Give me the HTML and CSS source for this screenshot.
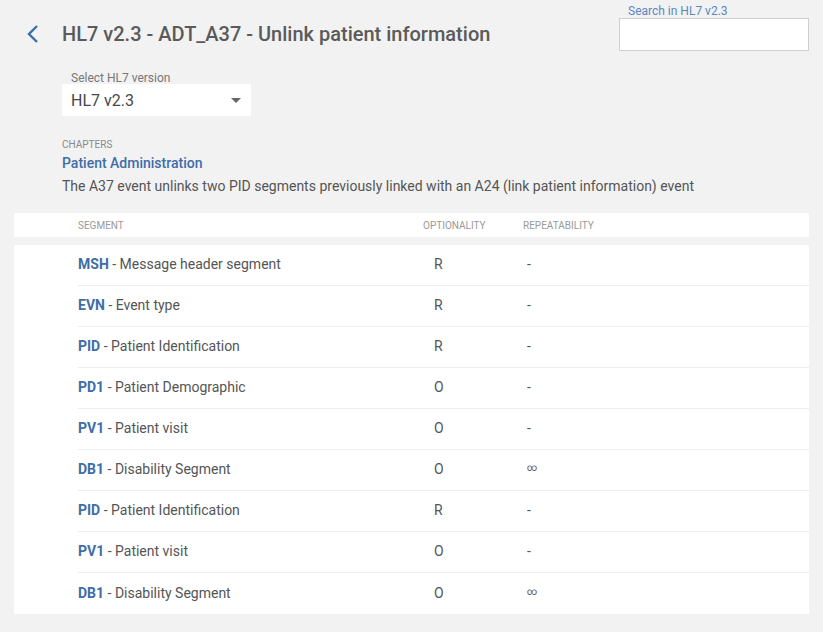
FILE: index.html
```html
<!DOCTYPE html>
<html>
<head>
<meta charset="utf-8">
<link rel="stylesheet" href="styles.css">
</head>
<body>
<div class="page">
  <header class="top">
    <div class="title-row">
      <a class="back" href="#"><svg width="14" height="20" viewBox="0 0 14 20"><path d="M11 2 L3 10 L11 18" fill="none" stroke="#3d6dab" stroke-width="2.4"/></svg></a>
      <h1 class="title">HL7 v2.3 - ADT_A37 - Unlink patient information</h1>
    </div>
    <div class="search">
      <label class="search-label">Search in HL7 v2.3</label>
      <div class="search-input"></div>
    </div>
  </header>
  <div class="version">
    <div class="version-label">Select HL7 version</div>
    <div class="select"><span>HL7 v2.3</span><span class="caret"></span></div>
  </div>
  <div class="chapters">
    <div class="chap-label">CHAPTERS</div>
    <div class="chap-name">Patient Administration</div>
    <div class="chap-desc">The A37 event unlinks two PID segments previously linked with an A24 (link patient information) event</div>
  </div>
  <div class="table">
    <div class="thead">
      <div class="c-seg">SEGMENT</div>
      <div class="c-opt">OPTIONALITY</div>
      <div class="c-rep">REPEATABILITY</div>
    </div>
    <div class="tbody">
      <div class="row"><div class="c-seg"><b>MSH</b> - Message header segment</div><div class="c-opt">R</div><div class="c-rep">-</div></div>
      <div class="row"><div class="c-seg"><b>EVN</b> - Event type</div><div class="c-opt">R</div><div class="c-rep">-</div></div>
      <div class="row"><div class="c-seg"><b>PID</b> - Patient Identification</div><div class="c-opt">R</div><div class="c-rep">-</div></div>
      <div class="row"><div class="c-seg"><b>PD1</b> - Patient Demographic</div><div class="c-opt">O</div><div class="c-rep">-</div></div>
      <div class="row"><div class="c-seg"><b>PV1</b> - Patient visit</div><div class="c-opt">O</div><div class="c-rep">-</div></div>
      <div class="row"><div class="c-seg"><b>DB1</b> - Disability Segment</div><div class="c-opt">O</div><div class="c-rep inf">∞</div></div>
      <div class="row"><div class="c-seg"><b>PID</b> - Patient Identification</div><div class="c-opt">R</div><div class="c-rep">-</div></div>
      <div class="row"><div class="c-seg"><b>PV1</b> - Patient visit</div><div class="c-opt">O</div><div class="c-rep">-</div></div>
      <div class="row last"><div class="c-seg"><b>DB1</b> - Disability Segment</div><div class="c-opt">O</div><div class="c-rep inf">∞</div></div>
    </div>
  </div>
</div>
</body>
</html>
```
FILE: styles.css
```css
* { box-sizing: border-box; }
html, body { margin: 0; padding: 0; }
body {
  background: #f2f2f2;
  font-family: Roboto, "Liberation Sans", Arial, sans-serif;
  color: #555;
  width: 823px;
  height: 632px;
  overflow: hidden;
}
.page { padding: 0 14px 0 14px; }
.top {
  display: flex;
  justify-content: space-between;
  height: 62px;
}
.title-row {
  display: flex;
  align-items: center;
  padding-top: 22px;
  box-sizing: content-box;
  height: 24px;
}
.back {
  display: flex;
  width: 48px;
  padding-left: 12px;
  align-items: center;
}
.title {
  margin: 0;
  font-size: 20px;
  font-weight: 500;
  color: #5a5a5a;
  line-height: 24px;
}
.search {
  width: 190px;
  padding-top: 4px;
}
.search-label {
  display: block;
  font-size: 12px;
  color: #5b87c4;
  line-height: 14px;
  padding-left: 9px;
}
.search-input {
  height: 33px;
  background: #fff;
  border: 1px solid #cfcfcf;
}
.version { padding-left: 48px; }
.version-label {
  font-size: 12px;
  color: #777;
  line-height: 12px;
  padding-left: 9px;
  margin-top: 10px;
}
.select {
  width: 189px;
  height: 32px;
  background: #fff;
  display: flex;
  align-items: center;
  justify-content: space-between;
  padding: 0 5px 0 9px;
  font-size: 16px;
  color: #474747;
}
.caret {
  width: 0; height: 0;
  border-left: 5px solid transparent;
  border-right: 5px solid transparent;
  border-top: 5px solid #666;
  margin-right: 5px;
}
.chapters { padding-left: 48px; margin-top: 23px; }
.chap-label {
  font-size: 10px;
  color: #8a8a8a;
  line-height: 12px;
}
.chap-name {
  font-size: 14px;
  font-weight: 500;
  color: #3e6da8;
  line-height: 16px;
  margin-top: 4px;
}
.chap-desc {
  font-size: 14px;
  color: #555;
  line-height: 16px;
  margin-top: 7px;
}
.table { margin-top: 19px; width: 795px; }
.thead {
  background: #fff;
  height: 24px;
  display: flex;
  align-items: center;
  font-size: 10px;
  color: #999;
  padding-left: 64px;
}
.thead .c-seg { width: 345px; }
.thead .c-opt { width: 100px; }
.tbody {
  background: #fff;
  margin-top: 8px;
  padding-left: 64px;
}
.row {
  display: flex;
  align-items: center;
  height: 41px;
  padding-bottom: 2px;
  border-bottom: 1px solid #eeeeee;
  font-size: 14px;
  color: #555;
}
.row.last { border-bottom: none; }
.row .c-seg { width: 356px; }
.row .c-seg b { font-weight: 700; color: #3e6da8; }
.row .c-opt { width: 93px; }
.row .c-rep.inf { font-size: 10px; padding-bottom: 3px; }
```
